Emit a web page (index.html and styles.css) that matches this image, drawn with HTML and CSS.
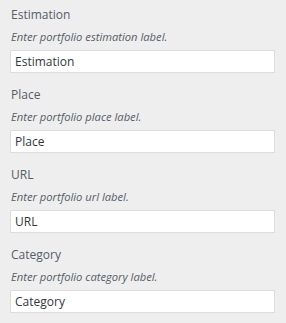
FILE: index.html
```html
<!DOCTYPE html>
<html lang="en">
<head>
    <meta charset="UTF-8">
    <meta name="viewport" content="width=device-width, initial-scale=1.0">
    <title>Portfolio Labels</title>
    <link rel="stylesheet" href="styles.css">
</head>
<body>
    <div class="panel">
        <div class="control">
            <label class="control-title" for="estimation">Estimation</label>
            <span class="control-desc">Enter portfolio estimation label.</span>
            <input type="text" id="estimation" class="control-input" value="Estimation">
        </div>
        <div class="control">
            <label class="control-title" for="place">Place</label>
            <span class="control-desc">Enter portfolio place label.</span>
            <input type="text" id="place" class="control-input" value="Place">
        </div>
        <div class="control">
            <label class="control-title" for="url">URL</label>
            <span class="control-desc">Enter portfolio url label.</span>
            <input type="text" id="url" class="control-input" value="URL">
        </div>
        <div class="control">
            <label class="control-title" for="category">Category</label>
            <span class="control-desc">Enter portfolio category label.</span>
            <input type="text" id="category" class="control-input" value="Category">
        </div>
    </div>
</body>
</html>
```

FILE: styles.css
```css
body {
    font-family: "Open Sans", "Noto Sans", sans-serif;
    background-color: #eeeeee;
    margin: 0;
}

.panel {
    padding: 0 11px 0 10px;
}

.control {
    display: flex;
    flex-direction: column;
    height: 80px;
    padding-top: 6px;
    box-sizing: border-box;
}

.control-title {
    font-size: 12px;
    font-weight: 500;
    line-height: 18px;
    color: #555d66;
    padding-left: 1px;
}

.control-desc {
    font-size: 11.2px;
    font-style: italic;
    line-height: 16px;
    color: #555d66;
    margin-top: 5px;
    padding-left: 1px;
}

.control-input {
    box-sizing: border-box;
    width: 100%;
    height: 23px;
    margin-top: 5px;
    padding: 0 4px;
    border: 1px solid #dddddd;
    background-color: #ffffff;
    font-family: inherit;
    font-size: 12px;
    color: #32373c;
    outline: none;
}
```
